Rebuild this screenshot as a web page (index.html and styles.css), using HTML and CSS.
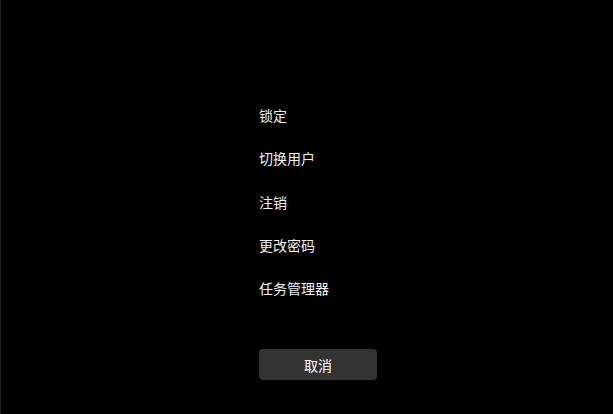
FILE: index.html
```html
<!DOCTYPE html>
<html lang="zh-CN">
<head>
<meta charset="utf-8">
<title>安全选项</title>
<link rel="stylesheet" href="styles.css">
</head>
<body>
<main class="screen">
  <ul class="options">
    <li class="option">锁定</li>
    <li class="option">切换用户</li>
    <li class="option">注销</li>
    <li class="option">更改密码</li>
    <li class="option">任务管理器</li>
  </ul>
  <button class="cancel" type="button">取消</button>
</main>
</body>
</html>
```
FILE: styles.css
```css
html, body {
  margin: 0;
  padding: 0;
  background: #000;
}

.screen {
  box-sizing: border-box;
  width: 613px;
  height: 414px;
  padding: 94px 0 0 259px;
  display: flex;
  flex-direction: column;
  align-items: flex-start;
  border-left: 1px solid #1e1e1e;
  font-family: "Noto Sans CJK SC", "Noto Sans", sans-serif;
  color: #f2f2f2;
}

.options {
  list-style: none;
  margin: 0;
  padding: 0;
}

.option {
  font-size: 14px;
  line-height: 43.25px;
  height: 43.25px;
  margin-left: -1px;
}

.cancel {
  margin: 39px 0 0 -1px;
  width: 118px;
  height: 31px;
  border: none;
  border-radius: 4px;
  background: #333333;
  color: #ffffff;
  font-family: "Noto Sans CJK SC", "Noto Sans", sans-serif;
  font-size: 14px;
  padding: 0;
}
```
